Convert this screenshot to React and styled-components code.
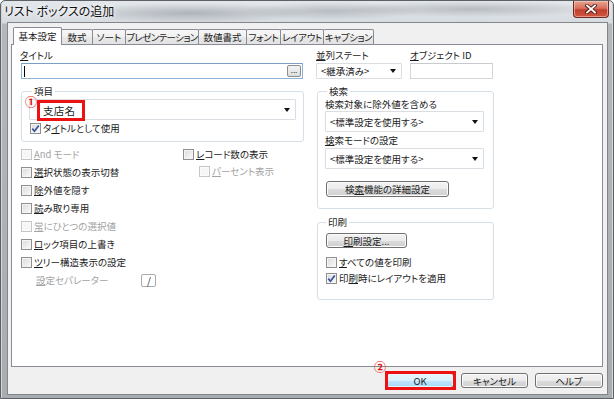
import React from "react";
import styled, { createGlobalStyle, css } from "styled-components";

const GlobalStyle = createGlobalStyle`
  html, body {
    margin: 0;
    padding: 0;
    background: #ffffff;
  }
  body {
    font-family: "Noto Sans CJK JP", "Noto Sans", sans-serif;
    font-feature-settings: "palt";
    font-size: 9.5px;
    color: #1b1b1b;
  }
  * {
    box-sizing: border-box;
  }
`;

const Window = styled.div`
  position: relative;
  width: 614px;
  height: 399px;
  display: flex;
  flex-direction: column;
  border: 1px solid #5d6166;
  border-radius: 5px 5px 0 0;
  padding: 0 5px 3px 6px;
  background:
    radial-gradient(ellipse 120px 10px at 190px 12px, rgba(70, 76, 84, 0.3), transparent),
    radial-gradient(ellipse 90px 9px at 330px 10px, rgba(70, 76, 84, 0.25), transparent),
    radial-gradient(ellipse 130px 8px at 470px 8px, rgba(70, 76, 84, 0.25), transparent),
    linear-gradient(180deg, #e3e7eb 0px, #d6dbe0 22px, #b3b8bd 23px, #a8adb2 100%);
  box-shadow: inset 1px 0 0 #d4d7da, inset -1px 0 0 #d4d7da;
`;

const TitleBar = styled.div`
  height: 21px;
  display: flex;
  align-items: flex-start;
  justify-content: space-between;
  margin: 0 -5px 0 -6px;
  padding-left: 3px;
  padding-right: 4px;
`;

const TitleText = styled.div`
  font-size: 12px;
  line-height: 20px;
  color: #101010;
  text-shadow: 0 0 6px #ffffff, 0 0 3px #ffffff;
`;

const CloseButton = styled.div`
  width: 36px;
  height: 17px;
  display: flex;
  align-items: center;
  justify-content: center;
  border: 1px solid #6e2a22;
  border-top: none;
  border-radius: 0 0 4px 4px;
  background: linear-gradient(180deg, #e9a493 0%, #d8705d 45%, #c2402f 55%, #d0563f 100%);
  box-shadow: inset 0 0 0 1px rgba(255, 220, 210, 0.5);
`;

const Client = styled.div`
  flex: 1;
  display: flex;
  flex-direction: column;
  background: #f0f0f0;
  border: 1px solid #82868b;
  padding: 4px 4px 0 3px;
`;

const TabStrip = styled.div`
  display: flex;
  align-items: flex-end;
  height: 17px;
  padding-left: 2px;
  position: relative;
  z-index: 1;
`;

const Tab = styled.div`
  width: ${(p) => p.$w}px;
  height: ${(p) => (p.$active ? 18 : 15)}px;
  margin-left: -1px;
  margin-bottom: ${(p) => (p.$active ? -1 : 0)}px;
  display: flex;
  align-items: center;
  justify-content: center;
  border: 1px solid #898c95;
  border-bottom: none;
  border-radius: 2px 2px 0 0;
  line-height: 12px;
  white-space: nowrap;
  letter-spacing: ${(p) => p.$ls || 0}px;
  padding-bottom: ${(p) => (p.$active ? 2 : 0)}px;
  background: ${(p) =>
    p.$active
      ? "#ffffff"
      : "linear-gradient(180deg, #f7f7f7 0%, #f0f0f0 50%, #e8e8e8 51%, #e2e2e2 100%)"};
  position: relative;
  z-index: ${(p) => (p.$active ? 2 : 1)};
  &:first-child {
    margin-left: 0;
  }
`;

const Panel = styled.div`
  height: 323px;
  display: flex;
  gap: 12px;
  background: #ffffff;
  border: 1px solid #898c95;
  padding: 4px 0 0 8px;
`;

const Column = styled.div`
  width: ${(p) => p.$w}px;
  display: flex;
  flex-direction: column;
`;

const Label = styled.div`
  height: 12px;
  line-height: 12px;
  white-space: nowrap;
  color: ${(p) => (p.$disabled ? "#a3a3a3" : "#1b1b1b")};
  margin-top: ${(p) => p.$mt || 0}px;
  margin-bottom: ${(p) => p.$mb || 0}px;
`;

const U = styled.span`
  text-decoration: underline;
  text-underline-offset: 1px;
  text-decoration-thickness: 1px;
`;

const TextBox = styled.div`
  width: ${(p) => p.$w}px;
  height: 16px;
  margin-left: ${(p) => p.$ml || 0}px;
  display: flex;
  align-items: center;
  justify-content: space-between;
  background: #ffffff;
  border: 1px solid ${(p) => (p.$focus ? "#8eb3d6" : "#d3d6da")};
  border-top-color: ${(p) => (p.$focus ? "#7a9ec4" : "#c7cbcf")};
  padding: 0 1px 0 2px;
`;

const Caret = styled.span`
  width: 1px;
  height: 11px;
  background: #000000;
`;

const DotsButton = styled.div`
  width: 14px;
  height: 12px;
  border: 1px solid #8a8d91;
  border-radius: 2px;
  background: linear-gradient(180deg, #f4f4f4, #dcdcdc);
  font-size: 8px;
  line-height: 8px;
  text-align: center;
  color: #333333;
`;

const Group = styled.fieldset`
  width: ${(p) => p.$w}px;
  margin: ${(p) => p.$mt || 0}px 0 0 1px;
  padding: ${(p) => p.$pad};
  min-width: 0;
  border: 1px solid #d5dfe5;
  border-radius: 3px;
  position: relative;
  display: flex;
  flex-direction: column;
  align-items: flex-start;
`;

const Legend = styled.legend`
  margin-left: ${(p) => p.$ml}px;
  padding: 0 2px;
  height: 12px;
  line-height: 12px;
`;

const Combo = styled.div`
  position: relative;
  width: ${(p) => p.$w}px;
  height: ${(p) => p.$h}px;
  margin-top: ${(p) => p.$mt || 0}px;
  display: flex;
  align-items: center;
  justify-content: space-between;
  background: #ffffff;
  border: 1px solid #dadde1;
  border-radius: 1px;
  padding: 0 5px 0 ${(p) => p.$pl || 3}px;
  white-space: nowrap;
`;

const Arrow = styled.span`
  width: 0;
  height: 0;
  border-left: 3px solid transparent;
  border-right: 3px solid transparent;
  border-top: 4px solid #111111;
`;

const Highlight = styled.span`
  position: relative;
  height: 21px;
  margin-top: 1px;
  display: flex;
  align-items: center;
  border: 3px solid #ee1111;
  padding: 0 7px 0 3px;
  font-size: 10.5px;
  letter-spacing: 0.3px;
`;

const Marker = styled.span`
  position: absolute;
  left: ${(p) => p.$x}px;
  top: ${(p) => p.$y}px;
  font-size: 12px;
  line-height: 12px;
  font-weight: 700;
  color: #e41010;
  background: transparent;
`;

const CheckRow = styled.div`
  height: ${(p) => p.$h || 18}px;
  display: flex;
  align-items: center;
  gap: 2px;
  white-space: nowrap;
  padding-left: ${(p) => p.$indent || 0}px;
  margin-top: ${(p) => p.$mt || 0}px;
  margin-left: ${(p) => p.$ml || 0}px;
  color: ${(p) => (p.$disabled ? "#a3a3a3" : "#1b1b1b")};
`;

const Box = styled.span`
  width: 11px;
  height: 11px;
  flex: none;
  display: flex;
  align-items: center;
  justify-content: center;
  border: 1px solid ${(p) => (p.$disabled ? "#c6c6c6" : "#8e8f91")};
  background: ${(p) =>
    p.$disabled ? "#f6f6f6" : "linear-gradient(135deg, #d9d9d9 0%, #eeeeee 60%, #fbfbfb 100%)"};
  box-shadow: inset 0 0 0 1px ${(p) => (p.$disabled ? "#fbfbfb" : "#f4f4f4")};
`;

const Options = styled.div`
  display: grid;
  grid-template-columns: 162px 1fr;
  margin: 3px 0 0 1px;
`;

const OptionList = styled.div`
  display: flex;
  flex-direction: column;
`;

const SeparatorRow = styled.div`
  height: 18px;
  display: flex;
  align-items: center;
  padding-left: 15px;
`;

const SmallInput = styled.div`
  width: 15px;
  height: 13px;
  margin-left: 33px;
  border: 1px solid #a8abaf;
  border-radius: 2px;
  background: #ffffff;
  font-size: 10px;
  line-height: 11px;
  text-align: center;
  color: #333333;
`;

const TopFields = styled.div`
  display: flex;
  gap: 8px;
`;

const Field = styled.div`
  width: ${(p) => p.$w}px;
  display: flex;
  flex-direction: column;
  gap: 2px;
`;

const Button = styled.div`
  position: relative;
  width: ${(p) => p.$w}px;
  height: ${(p) => p.$h || 15}px;
  margin-top: ${(p) => p.$mt || 0}px;
  margin-left: ${(p) => p.$ml || 0}px;
  display: flex;
  align-items: center;
  justify-content: center;
  border: 1px solid #707070;
  border-radius: 3px;
  line-height: 12px;
  white-space: nowrap;
  background: linear-gradient(180deg, #f3f3f3 0%, #ebebeb 50%, #dcdcdc 51%, #d0d0d0 100%);
  box-shadow: inset 0 0 0 1px #fbfbfb;
  ${(p) =>
    p.$default &&
    css`
      border-color: #3c7fb1;
      background: linear-gradient(180deg, #eaf6fd 0%, #d9f0fc 50%, #bee6fd 51%, #a7d9f5 100%);
      box-shadow: inset 0 0 0 1px #e3f4fc;
    `}
  ${(p) =>
    p.$marked &&
    css`
      &::after {
        content: "";
        position: absolute;
        inset: -3px -3px -3px -2px;
        border: 3px solid #ee1111;
      }
    `}
`;

const ButtonRow = styled.div`
  display: flex;
  justify-content: flex-end;
  gap: 7px;
  margin-top: 6px;
`;

const Check = ({ checked, disabled }) => (
  <Box $disabled={disabled}>
    {checked && (
      <svg width="9" height="9" viewBox="0 0 9 9">
        <path d="M1.3 4.6 L3.5 7.2 L7.8 1.4" fill="none" stroke="#34539c" strokeWidth="1.7" />
      </svg>
    )}
  </Box>
);

const Option = ({ checked, disabled, indent, h, mt, ml, children }) => (
  <CheckRow $disabled={disabled} $indent={indent} $h={h} $mt={mt} $ml={ml}>
    <Check checked={checked} disabled={disabled} />
    <span>{children}</span>
  </CheckRow>
);

const tabs = [
  ["基本設定", 49, 0],
  ["数式", 32, 0],
  ["ソート", 34, 0],
  ["プレゼンテーション", 74, -0.6],
  ["数値書式", 49, 0],
  ["フォント", 35, -0.3],
  ["レイアウト", 44, -0.3],
  ["キャプション", 51, -0.4],
];

export default function App() {
  return (
    <>
      <GlobalStyle />
      <Window>
        <TitleBar>
          <TitleText>リスト ボックスの追加</TitleText>
          <CloseButton>
            <svg width="12" height="10" viewBox="0 0 12 10">
              <path d="M2 1.5 L10 8.5 M10 1.5 L2 8.5" stroke="#4a1a14" strokeWidth="3.6" strokeLinecap="square" />
              <path d="M2 1.5 L10 8.5 M10 1.5 L2 8.5" stroke="#ffffff" strokeWidth="1.8" strokeLinecap="square" />
            </svg>
          </CloseButton>
        </TitleBar>

        <Client>
          <TabStrip>
            {tabs.map(([name, w, ls], i) => (
              <Tab key={name} $w={w} $ls={ls} $active={i === 0}>
                {name}
              </Tab>
            ))}
          </TabStrip>

          <Panel>
            <Column $w={284}>
              <Label $mb={2}>
                <U>タ</U>イトル
              </Label>
              <TextBox $w={282} $ml={1} $focus>
                <Caret />
                <DotsButton>...</DotsButton>
              </TextBox>

              <Group $w={283} $mt={6} $pad="2px 8px 6px 7px">
                <Legend $ml={3}>項目</Legend>
                <Combo $w={267} $h={21} $pl={7}>
                  <Highlight>
                    <Marker $x={-15} $y={-7}>①</Marker>
                    支店名
                  </Highlight>
                  <Arrow />
                </Combo>
                <Option checked h={14} mt={1} ml={1}>
                  タ<U>イ</U>トルとして使用
                </Option>
              </Group>

              <Options>
                <OptionList>
                  <Option disabled>
                    <U>A</U>nd モード
                  </Option>
                  <Option>
                    <U>選</U>択状態の表示切替
                  </Option>
                  <Option>
                    <U>除</U>外値を隠す
                  </Option>
                  <Option>
                    <U>読</U>み取り専用
                  </Option>
                  <Option disabled>
                    <U>常</U>にひとつの選択値
                  </Option>
                  <Option>
                    <U>ロ</U>ック項目の上書き
                  </Option>
                  <Option>
                    <U>ツ</U>リー構造表示の設定
                  </Option>
                  <SeparatorRow>
                    <Label $disabled>
                      <U>設</U>定セパレーター
                    </Label>
                    <SmallInput>/</SmallInput>
                  </SeparatorRow>
                </OptionList>
                <OptionList>
                  <Option>
                    <U>レ</U>コード数の表示
                  </Option>
                  <Option disabled indent={16} h={16}>
                    <U>パ</U>ーセント表示
                  </Option>
                </OptionList>
              </Options>
            </Column>

            <Column $w={177}>
              <TopFields>
                <Field $w={86}>
                  <Label>
                    <U>並</U>列ステート
                  </Label>
                  <Combo $w={86} $h={16} $pl={4}>
                    <span>&lt;継承済み&gt;</span>
                    <Arrow />
                  </Combo>
                </Field>
                <Field $w={83}>
                  <Label>
                    <U>オ</U>ブジェクト ID
                  </Label>
                  <TextBox $w={83} />
                </Field>
              </TopFields>

              <Group $w={177} $mt={6} $pad="1px 8px 11px 7px">
                <Legend $ml={2}>検索</Legend>
                <Label>検索対象に除外値を含める</Label>
                <Combo $w={159} $h={21} $mt={1} $pl={4}>
                  <span>&lt;標準設定を使用する&gt;</span>
                  <Arrow />
                </Combo>
                <Label $mt={2}>
                  <U>検</U>索モードの設定
                </Label>
                <Combo $w={159} $h={21} $mt={2} $pl={4}>
                  <span>&lt;標準設定を使用する&gt;</span>
                  <Arrow />
                </Combo>
                <Button $w={123} $h={16} $mt={12} $ml={1}>
                  検<U>索</U>機能の詳細設定
                </Button>
              </Group>

              <Group $w={177} $mt={7} $pad="5px 8px 13px 7px">
                <Legend $ml={1}>印刷</Legend>
                <Button $w={81} $ml={1}>
                  <U>印</U>刷設定...
                </Button>
                <Option h={16} mt={6} ml={1}>
                  <U>す</U>べての値を印刷
                </Option>
                <Option checked h={16} ml={1}>
                  印<U>刷</U>時にレイアウトを適用
                </Option>
              </Group>
            </Column>
          </Panel>

          <ButtonRow>
            <Button $w={68} $default $marked>
              <Marker $x={-13} $y={-13}>②</Marker>
              OK
            </Button>
            <Button $w={67}>キャンセル</Button>
            <Button $w={68}>ヘルプ</Button>
          </ButtonRow>
        </Client>
      </Window>
    </>
  );
}
